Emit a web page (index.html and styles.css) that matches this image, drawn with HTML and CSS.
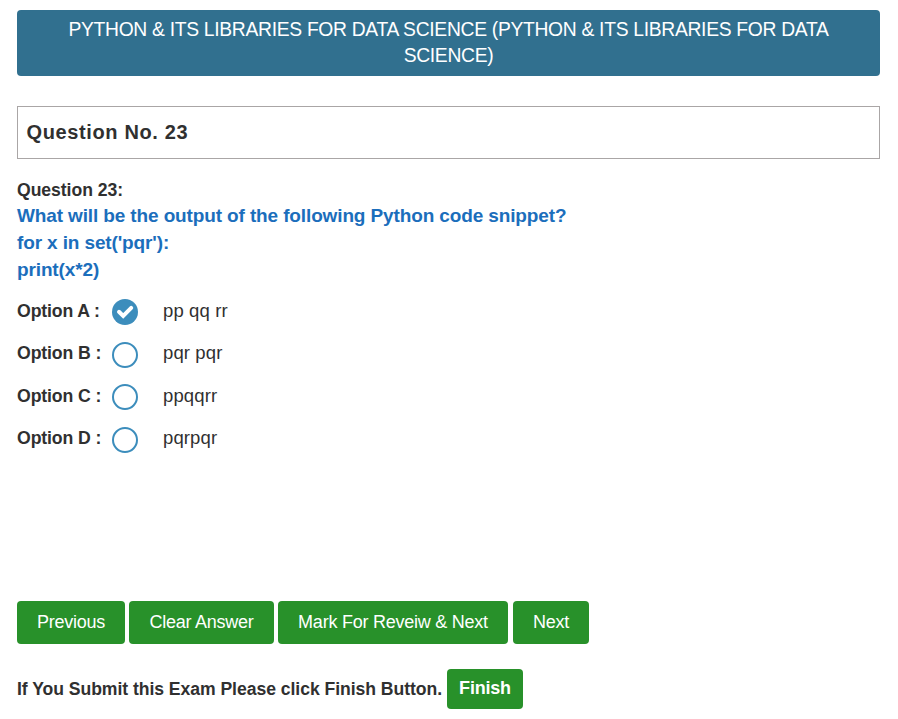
FILE: index.html
```html
<!DOCTYPE html>
<html lang="en">
<head>
<meta charset="utf-8">
<title>Online Exam</title>
<link rel="stylesheet" href="styles.css">
</head>
<body>
<main class="exam">
  <header class="title"><span>PYTHON &amp; ITS LIBRARIES FOR DATA SCIENCE (PYTHON &amp; ITS LIBRARIES FOR DATA</span><span>SCIENCE)</span></header>
  <h1 class="number">Question No. 23</h1>
  <section class="question">
    <div class="label">Question 23:</div>
    <div class="text">What will be the output of the following Python code snippet?</div>
    <div class="text">for x in set('pqr'):</div>
    <div class="text">print(x*2)</div>
  </section>
  <section class="options">
    <div class="option"><b>Option A :</b><i class="radio checked"><svg viewBox="0 0 26 26"><path d="M7 12.8 11.2 16.9 19.2 8.9" /></svg></i><span>pp qq rr</span></div>
    <div class="option"><b>Option B :</b><i class="radio"></i><span>pqr pqr</span></div>
    <div class="option"><b>Option C :</b><i class="radio"></i><span>ppqqrr</span></div>
    <div class="option"><b>Option D :</b><i class="radio"></i><span>pqrpqr</span></div>
  </section>
  <nav class="actions">
    <button class="btn prev">Previous</button>
    <button class="btn clear">Clear Answer</button>
    <button class="btn mark">Mark For Reveiw &amp; Next</button>
    <button class="btn next">Next</button>
  </nav>
  <footer class="submit"><span class="note">If You Submit this Exam Please click Finish Button.</span><button class="btn finish">Finish</button></footer>
</main>
</body>
</html>
```
FILE: styles.css
```css
* { box-sizing: border-box; }
body { margin: 0; background: #fff; color: #303030; font-family: "Liberation Sans", Arial, sans-serif; }
.exam { width: 863px; margin: 10px 0 0 17px; }
.title { height: 66px; padding-top: 7px; border-radius: 4px; background: #31708f; color: #fff; font-size: 19.3px; line-height: 26px; text-align: center; white-space: nowrap; letter-spacing: -0.3px; }
.title span { display: block; }
.number { height: 53px; margin: 30px 0 0; padding-left: 8.5px; border: 1px solid #aaa6a6; font-size: 20px; line-height: 51px; letter-spacing: 0.63px; }
.question { margin-top: 18px; font-weight: bold; white-space: nowrap; }
.label { height: 25px; font-size: 17.6px; line-height: 27px; letter-spacing: -0.05px; }
.text { height: 27px; color: #1b6ebc; font-size: 19px; line-height: 27px; letter-spacing: -0.13px; }
.options { margin-top: 8px; }
.option { display: flex; align-items: center; height: 42.5px; font-size: 18.5px; line-height: 20px; }
.option b { width: 95px; padding-bottom: 3px; font-size: 17.7px; white-space: nowrap; letter-spacing: -0.13px; }
.option span { margin-left: 25px; padding-bottom: 3px; letter-spacing: 0.12px; }
.radio { width: 26px; height: 26px; border: 2px solid #3c8dbc; border-radius: 50%; }
.checked { border: 0; background: #3c8dbc; }
.checked svg { display: block; fill: none; stroke: #fff; stroke-width: 4; stroke-linecap: round; }
.actions { display: flex; gap: 4px; margin-top: 140px; }
.btn { height: 43px; padding: 0; border: 0; border-radius: 4px; background: #28912a; color: #fff; font: 18px "Liberation Sans", Arial, sans-serif; letter-spacing: -0.24px; white-space: nowrap; }
.prev { width: 108px; }
.clear { width: 145px; }
.mark { width: 230px; }
.next { width: 76px; margin-left: 1px; }
.submit { display: flex; align-items: center; gap: 5px; margin-top: 25px; font-weight: bold; font-size: 17.6px; }
.note { width: 425px; white-space: nowrap; letter-spacing: -0.05px; }
.finish { width: 76px; height: 40px; padding-bottom: 2px; font-weight: bold; letter-spacing: -0.2px; }
```
